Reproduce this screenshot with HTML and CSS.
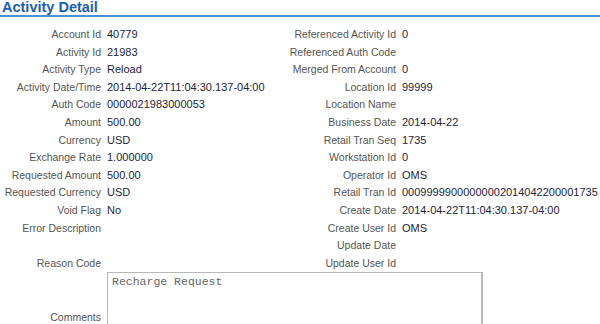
FILE: index.html
```html
<!DOCTYPE html>
<html>
<head>
  <title>Activity Detail</title>
  <link rel="stylesheet" href="styles.css">
</head>
<body>
  <div class="panel">
    <h1 class="panel-title">Activity Detail</h1>
    <div class="detail-grid">
      <span class="label">Account Id</span><span class="value">40779</span>
      <span class="label">Referenced Activity Id</span><span class="value">0</span>

      <span class="label">Activity Id</span><span class="value">21983</span>
      <span class="label">Referenced Auth Code</span><span class="value"></span>

      <span class="label">Activity Type</span><span class="value">Reload</span>
      <span class="label">Merged From Account</span><span class="value">0</span>

      <span class="label">Activity Date/Time</span><span class="value">2014-04-22T11:04:30.137-04:00</span>
      <span class="label">Location Id</span><span class="value">99999</span>

      <span class="label">Auth Code</span><span class="value">0000021983000053</span>
      <span class="label">Location Name</span><span class="value"></span>

      <span class="label">Amount</span><span class="value">500.00</span>
      <span class="label">Business Date</span><span class="value">2014-04-22</span>

      <span class="label">Currency</span><span class="value">USD</span>
      <span class="label">Retail Tran Seq</span><span class="value">1735</span>

      <span class="label">Exchange Rate</span><span class="value">1.000000</span>
      <span class="label">Workstation Id</span><span class="value">0</span>

      <span class="label">Requested Amount</span><span class="value">500.00</span>
      <span class="label">Operator Id</span><span class="value">OMS</span>

      <span class="label">Requested Currency</span><span class="value">USD</span>
      <span class="label">Retail Tran Id</span><span class="value">00099999000000002014042200001735</span>

      <span class="label">Void Flag</span><span class="value">No</span>
      <span class="label">Create Date</span><span class="value">2014-04-22T11:04:30.137-04:00</span>

      <span class="label">Error Description</span><span class="value"></span>
      <span class="label">Create User Id</span><span class="value">OMS</span>

      <span class="label"></span><span class="value"></span>
      <span class="label">Update Date</span><span class="value"></span>

      <span class="label">Reason Code</span><span class="value"></span>
      <span class="label">Update User Id</span><span class="value"></span>

      <span class="label comments-label">Comments</span>
      <textarea class="comments" readonly>Recharge Request</textarea>
    </div>
  </div>
</body>
</html>
```

FILE: styles.css
```css
* {
  box-sizing: border-box;
}

body {
  margin: 0;
  padding: 0;
  font-family: "Liberation Sans", Arial, sans-serif;
  background-color: #fff;
  overflow: hidden;
}

.panel-title {
  margin: 0;
  padding: 0 0 0 2px;
  height: 17px;
  font-size: 14.5px;
  line-height: 15px;
  font-weight: bold;
  color: #1b5fb0;
  border-bottom: 2px solid #4f8fd6;
}

.detail-grid {
  display: grid;
  grid-template-columns: 101px 170px 113px 1fr;
  grid-auto-rows: 17.6px;
  column-gap: 6px;
  margin-top: 9px;
}

.label {
  text-align: right;
  font-size: 10.5px;
  color: #555;
  line-height: 17.6px;
  white-space: nowrap;
}

.value {
  font-size: 11px;
  color: #1e1e3c;
  line-height: 17.6px;
  white-space: nowrap;
}

.comments-label {
  grid-row: span 6;
  align-self: start;
  padding-top: 37px;
}

.comments {
  grid-column: 2 / 5;
  grid-row: span 6;
  justify-self: start;
  width: 376px;
  height: 94px;
  margin: 0;
  padding: 2px 4px;
  font-family: "Liberation Mono", "Courier New", monospace;
  font-size: 11.5px;
  color: #666;
  border: 1px solid #b8b8b8;
  border-right-width: 2px;
  resize: none;
}
```
